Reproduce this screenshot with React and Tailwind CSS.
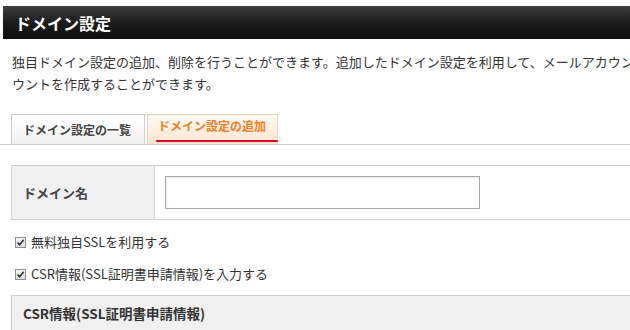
const font = { fontFamily: '"Noto Sans CJK JP", "Noto Sans", sans-serif' };

const CheckMark = () => (
  <span className="inline-flex items-center justify-center w-[11px] h-[11px] border border-[#8f8f8f] bg-gradient-to-b from-[#f4f4f4] to-[#dcdcdc] mr-[5px]">
    <svg width="9" height="9" viewBox="0 0 9 9">
      <path d="M1.5 4.5 L3.6 6.8 L7.6 1.8" fill="none" stroke="#333" strokeWidth="1.7" />
    </svg>
  </span>
);

const App = () => {
  return (
    <div className="w-[630px] h-[330px] overflow-hidden bg-white text-[#333]" style={font}>
      {/* Header */}
      <div className="pt-[6px] pl-[3px]">
        <div className="h-[33px] bg-gradient-to-b from-[#404040] via-[#1c1c1c] to-[#0e0e0e] flex items-center pl-[12px]">
          <h1 className="text-white text-[16px] font-bold leading-none">ドメイン設定</h1>
        </div>
      </div>

      {/* Description */}
      <p className="mt-[12px] pl-[12px] pr-0 text-[13px] leading-[22px] whitespace-nowrap">
        独目ドメイン設定の追加、削除を行うことができます。追加したドメイン設定を利用して、メールアカウン
        <br />
        ウントを作成することができます。
      </p>

      {/* Tabs */}
      <div className="mt-[19px] flex items-end pl-[11px] border-b border-[#c8c8c8] h-[31px]">
        <div className="h-[30px] w-[134px] border border-b-0 border-[#cfcfcf] bg-gradient-to-b from-white to-[#f0f0f0] flex items-center pl-[11px] text-[12px] font-bold text-[#444]">
          ドメイン設定の一覧
        </div>
        <div className="ml-[2px] h-[30px] w-[131px] border border-b-0 border-[#f0d2b4] bg-gradient-to-b from-[#fffaf4] to-[#fde6cf] flex flex-col justify-end pb-[2px] pl-[10px] text-[12px] font-bold text-[#f07d22]">
          <span className="leading-none">ドメイン設定の追加</span>
          <span className="block mt-[8px] -ml-[2px] h-[2px] w-[122px] bg-[#e0002c] rounded-full" />
        </div>
      </div>

      {/* Table */}
      <div className="mt-[20px] ml-[11px] border-y border-[#cccccc] flex h-[55px]">
        <div className="w-[144px] bg-[#f0f0f0] border-l border-r border-[#d8d8d8] flex items-center pl-[11px] text-[13px] font-bold text-[#444]">
          ドメイン名
        </div>
        <div className="flex-1 flex items-center pl-[10px]">
          <div className="w-[315px] h-[33px] border border-[#a8a8a8] bg-white shadow-[inset_1px_1px_2px_rgba(0,0,0,0.08)]" />
        </div>
      </div>

      {/* Checkboxes */}
      <div className="pl-[15px] mt-[14px] flex items-center h-[16px] text-[13px]">
        <CheckMark />
        <span>無料独自SSLを利用する</span>
      </div>
      <div className="pl-[15px] mt-[16px] flex items-center h-[16px] text-[13px]">
        <CheckMark />
        <span>CSR情報(SSL証明書申請情報)を入力する</span>
      </div>

      {/* CSR section */}
      <div className="mt-[13px] ml-[11px] border-t border-l border-[#cccccc] bg-[#f0f0f0] h-[40px] flex items-start pt-[7px] pl-[11px]">
        <span className="text-[13.5px] font-bold text-[#333]">CSR情報(SSL証明書申請情報)</span>
      </div>
    </div>
  );
};

export default App;
